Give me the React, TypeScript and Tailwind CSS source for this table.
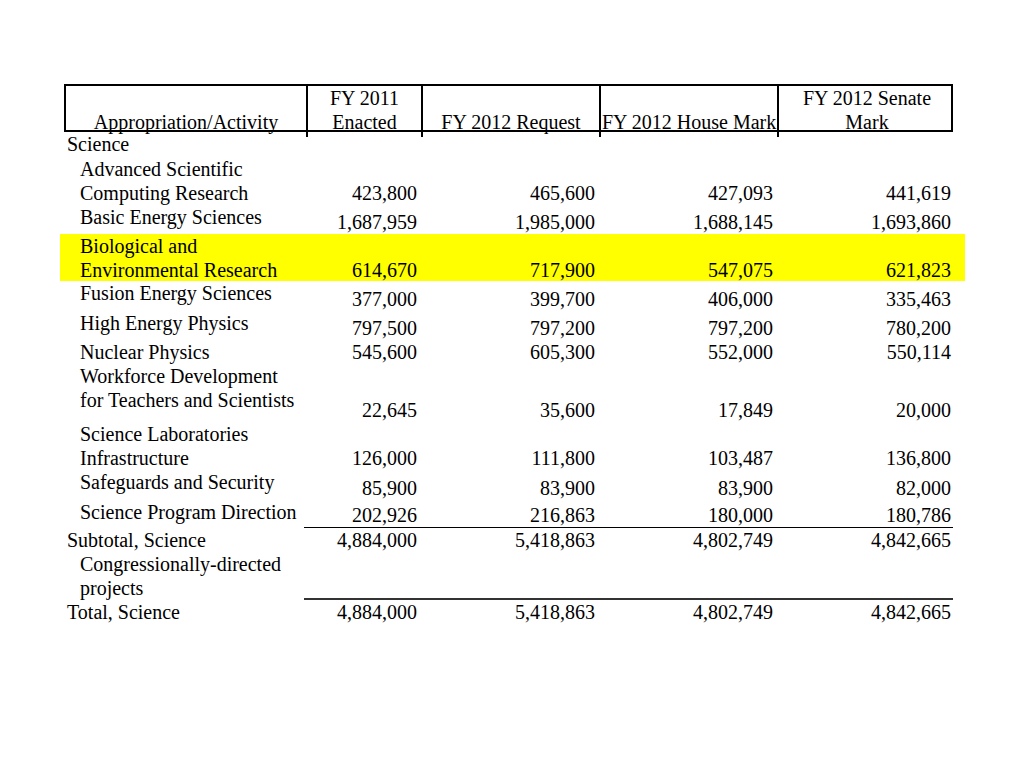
const cols = "grid grid-cols-[240px_115px_178px_178px_178px]";

type Row = {
  label: string[];
  values: string[];
  h: string;
  indent?: boolean;
  highlight?: boolean;
  underline?: "thin" | "thick";
};

const rows: Row[] = [
  { label: ["Science"], values: ["", "", "", ""], h: "h-[25px]" },
  {
    label: ["Advanced Scientific", "Computing Research"],
    values: ["423,800", "465,600", "427,093", "441,619"],
    h: "h-[48px]",
    indent: true,
  },
  {
    label: ["Basic Energy Sciences"],
    values: ["1,687,959", "1,985,000", "1,688,145", "1,693,860"],
    h: "h-[29px]",
    indent: true,
  },
  {
    label: ["Biological and", "Environmental Research"],
    values: ["614,670", "717,900", "547,075", "621,823"],
    h: "h-[47px]",
    indent: true,
    highlight: true,
  },
  {
    label: ["Fusion Energy Sciences"],
    values: ["377,000", "399,700", "406,000", "335,463"],
    h: "h-[30px]",
    indent: true,
  },
  {
    label: ["High Energy Physics"],
    values: ["797,500", "797,200", "797,200", "780,200"],
    h: "h-[29px]",
    indent: true,
  },
  {
    label: ["Nuclear Physics"],
    values: ["545,600", "605,300", "552,000", "550,114"],
    h: "h-[24px]",
    indent: true,
  },
  {
    label: ["Workforce Development", "for Teachers and Scientists"],
    values: ["22,645", "35,600", "17,849", "20,000"],
    h: "h-[58px]",
    indent: true,
  },
  {
    label: ["Science Laboratories", "Infrastructure"],
    values: ["126,000", "111,800", "103,487", "136,800"],
    h: "h-[48px]",
    indent: true,
  },
  {
    label: ["Safeguards and Security"],
    values: ["85,900", "83,900", "83,900", "82,000"],
    h: "h-[30px]",
    indent: true,
  },
  {
    label: ["Science Program Direction"],
    values: ["202,926", "216,863", "180,000", "180,786"],
    h: "h-[28px]",
    indent: true,
    underline: "thin",
  },
  {
    label: ["Subtotal, Science"],
    values: ["4,884,000", "5,418,863", "4,802,749", "4,842,665"],
    h: "h-[24px]",
  },
  {
    label: ["Congressionally-directed", "projects"],
    values: ["", "", "", ""],
    h: "h-[48px]",
    indent: true,
    underline: "thick",
  },
  {
    label: ["Total, Science"],
    values: ["4,884,000", "5,418,863", "4,802,749", "4,842,665"],
    h: "h-[24px]",
  },
];

function BodyRow({ row }: { row: Row }) {
  const line =
    row.underline === "thin"
      ? "border-b-[1.5px] border-black"
      : row.underline === "thick"
        ? "border-b-2 border-[#333]"
        : "";
  return (
    <div
      className={
        row.highlight
          ? "ml-[-4px] mr-[-12px] pl-[4px] pr-[12px] bg-[#ffff00]"
          : ""
      }
    >
      <div className={`${cols} ${row.h}`}>
        <div className={`self-start ${row.indent ? "pl-[16px]" : "pl-[3px]"} whitespace-nowrap`}>
          {row.label.map((l) => (
            <div key={l}>{l}</div>
          ))}
        </div>
        {row.values.map((v, i) => (
          <div
            key={i}
            className={`self-stretch flex items-end justify-end pr-[2px] ${line}`}
          >
            {v}
          </div>
        ))}
      </div>
    </div>
  );
}

export default function App() {
  return (
    <div className="w-[1024px] h-[768px] bg-white text-black font-['Liberation_Serif',_'Times_New_Roman',serif] text-[20px] leading-[24px] overflow-hidden">
      <div className="ml-[64px] mt-[84px] w-[889px]">
        <div className={`${cols} h-[48px] border-2 border-black`}>
          <div className="flex items-end justify-center pb-[3px]">Appropriation/Activity</div>
          <div className="flex items-end justify-center text-center pb-[3px] border-l-2 border-black">
            <div>
              FY 2011
              <br />
              Enacted
            </div>
          </div>
          <div className="flex items-end justify-center pb-[3px] border-l-2 border-black">FY 2012 Request</div>
          <div className="flex items-end justify-start pl-[1px] pb-[3px] whitespace-nowrap border-l-2 border-black">
            FY 2012 House Mark
          </div>
          <div className="flex items-end justify-center text-center pb-[3px] border-l-2 border-black">
            <div>
              FY 2012 Senate
              <br />
              Mark
            </div>
          </div>
        </div>
        {rows.map((r, i) => (
          <BodyRow key={i} row={r} />
        ))}
      </div>
    </div>
  );
}
